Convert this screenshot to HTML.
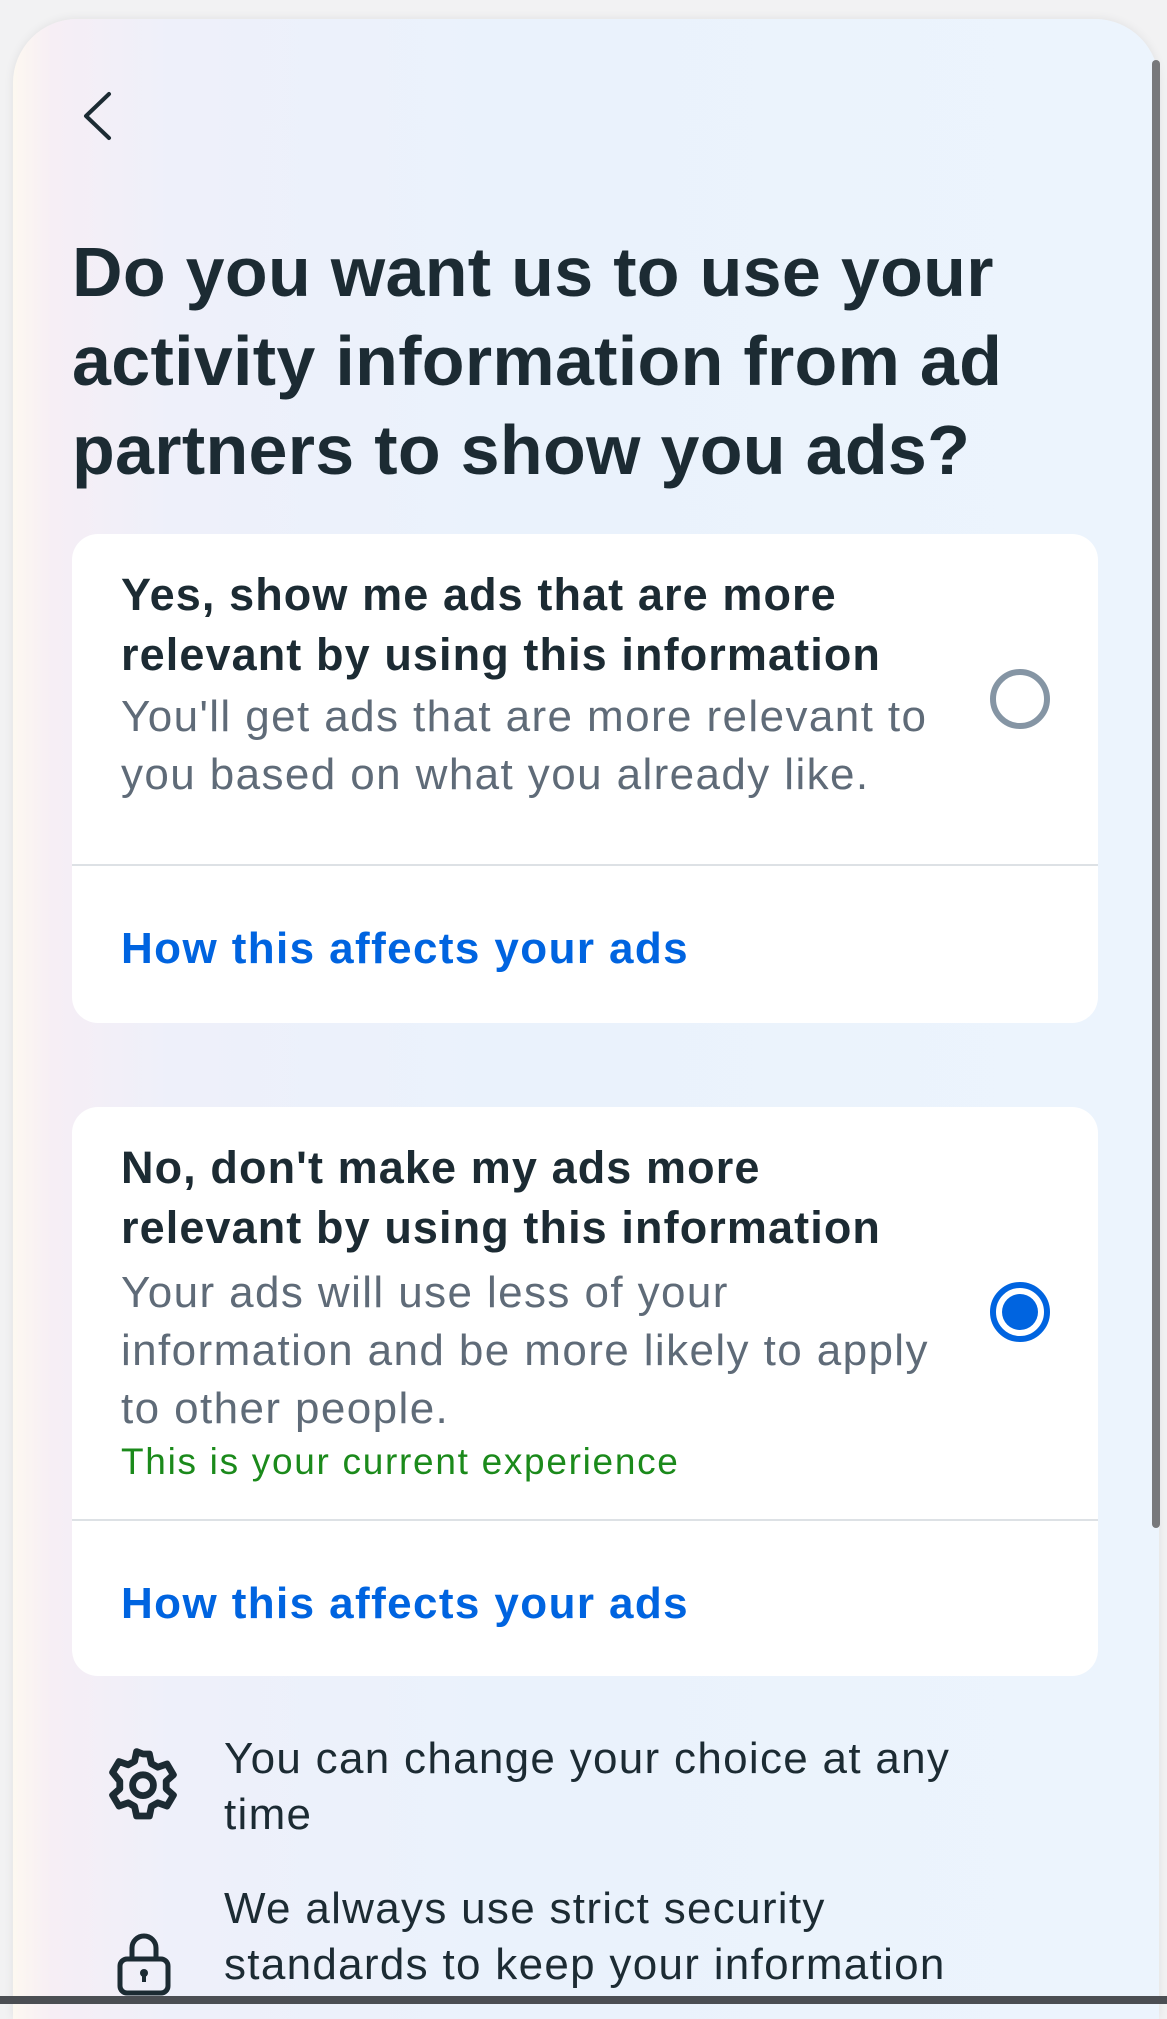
<!DOCTYPE html>
<html><head><meta charset="utf-8"><style>
*{margin:0;padding:0;box-sizing:border-box}
html,body{width:1167px;height:2004px;overflow:hidden;background:#f2f2f3;font-family:"Liberation Sans",sans-serif}
.page{position:absolute;left:13px;top:19px;width:1146px;height:2000px;border-radius:64px 64px 0 0;
background:linear-gradient(90deg,#fdf8f1 0px,#f6eef5 40px,#eef0fa 160px,#eaf2fc 500px,#ecf4fd 1146px);box-shadow:0 0 10px rgba(0,0,0,0.08)}
.t{position:absolute;white-space:nowrap;color:#1c2b33}
.h{font-size:70px;line-height:89px;font-weight:bold;left:72px;top:228px;letter-spacing:0.3px}
.card{position:absolute;left:72px;width:1026px;background:#fff;border-radius:26px}
.ti{font-size:45px;line-height:60px;font-weight:bold;left:121px;letter-spacing:1.1px}
.sub{font-size:44px;line-height:58px;color:#5f6b78;left:121px;letter-spacing:1.4px}
.lk{font-size:44px;line-height:60px;color:#0064e0;left:121px;font-weight:bold;letter-spacing:1.4px}
.div{position:absolute;left:72px;width:1026px;height:2px;background:#dde1e5}
.radio{position:absolute;width:60px;height:60px;border-radius:50%;border:6px solid #8595a4;left:990px}
.bt{font-size:44px;line-height:56px;left:224px;color:#1c2b33;letter-spacing:1.3px}
</style></head><body>
<div class="page"></div>
<div style="position:absolute;left:1152px;top:60px;width:8px;height:1468px;background:#77787b;border-radius:4px"></div>
<svg style="position:absolute;left:76px;top:90px" width="40" height="52" viewBox="0 0 40 52"><path d="M33 4 L10 26 L33 48" fill="none" stroke="#1c2b33" stroke-width="4" stroke-linecap="round" stroke-linejoin="round"/></svg>
<div class="t h">Do you want us to use your<br>activity information from ad<br>partners to show you ads?</div>

<div class="card" style="top:534px;height:489px"></div>
<div class="t ti" style="top:565px">Yes, show me ads that are more<br>relevant by using this information</div>
<div class="t sub" style="top:688px">You'll get ads that are more relevant to<br>you based on what you already like.</div>
<div class="radio" style="top:669px"></div>
<div class="div" style="top:864px"></div>
<div class="t lk" style="top:919px">How this affects your ads</div>

<div class="card" style="top:1107px;height:569px"></div>
<div class="t ti" style="top:1138px">No, don't make my ads more<br>relevant by using this information</div>
<div class="t sub" style="top:1264px">Your ads will use less of your<br>information and be more likely to apply<br>to other people.</div>
<div class="t" style="left:121px;top:1437px;font-size:37px;line-height:50px;color:#1b8a1b;letter-spacing:1.7px">This is your current experience</div>
<div class="radio" style="top:1282px;border-color:#0064e0"><div style="position:absolute;left:6px;top:6px;width:36px;height:36px;border-radius:50%;background:#0064e0"></div></div>
<div class="div" style="top:1519px"></div>
<div class="t lk" style="top:1574px">How this affects your ads</div>

<svg style="position:absolute;left:103px;top:1744px" width="80" height="84" viewBox="2 2 20 21"><path d="M12 2.5l1.6 0 .5 2.4 1.6.9 2.3-.8 1.6 2.7-1.8 1.6v1.9l1.8 1.6-1.6 2.7-2.3-.8-1.6.9-.5 2.4h-3.2l-.5-2.4-1.6-.9-2.3.8-1.6-2.7 1.8-1.6v-1.9L4.4 7.1 6 4.4l2.3.8 1.6-.9.5-2.4z" transform="translate(0 2)" fill="none" stroke="#1c2b33" stroke-width="1.7" stroke-linejoin="round"/><circle cx="12" cy="12.3" r="2.6" fill="none" stroke="#1c2b33" stroke-width="1.7"/></svg>
<div class="t bt" style="top:1731px">You can change your choice at any<br>time</div>
<svg style="position:absolute;left:116px;top:1930px" width="56" height="66" viewBox="0 0 56 66"><path d="M16 30 V18 a12 12 0 0 1 24 0 V30" fill="none" stroke="#1c2b33" stroke-width="5"/><rect x="4" y="29" width="48" height="34" rx="7" fill="none" stroke="#1c2b33" stroke-width="5"/><circle cx="28" cy="43" r="4" fill="#1c2b33"/><rect x="26" y="44" width="4" height="8" fill="#1c2b33"/></svg>
<div class="t bt" style="top:1881px">We always use strict security<br>standards to keep your information</div>
<div style="position:absolute;left:0;top:1996px;width:1167px;height:8px;background:#4b4e53"></div>
</body></html>
